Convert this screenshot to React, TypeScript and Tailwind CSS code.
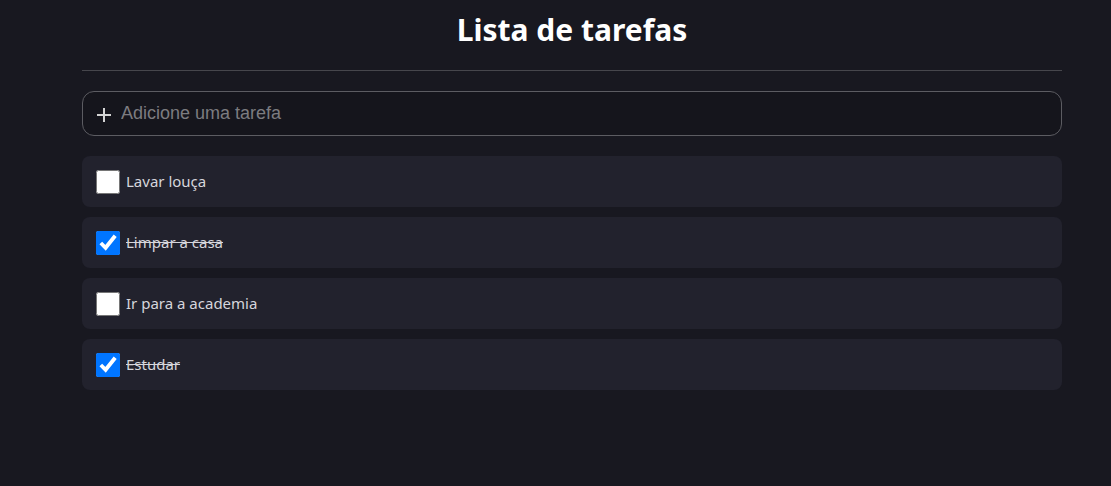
import React, { useState } from 'react';

type Task = { id: number; title: string; done: boolean };

const INITIAL: Task[] = [
  { id: 1, title: 'Lavar louça', done: false },
  { id: 2, title: 'Limpar a casa', done: true },
  { id: 3, title: 'Ir para a academia', done: false },
  { id: 4, title: 'Estudar', done: true },
];

export default function App() {
  const [tasks, setTasks] = useState<Task[]>(INITIAL);
  const [text, setText] = useState('');

  const toggle = (id: number) =>
    setTasks((t) => t.map((x) => (x.id === id ? { ...x, done: !x.done } : x)));

  const add = (e: React.FormEvent) => {
    e.preventDefault();
    if (!text.trim()) return;
    setTasks((t) => [...t, { id: Date.now(), title: text.trim(), done: false }]);
    setText('');
  };

  return (
    <div className="min-h-screen w-full bg-[#181820] pl-[82px] font-['Noto_Sans',sans-serif]">
      <div className="w-[980px] flex flex-col">
        <h1 className="pt-[10px] pb-[20px] text-center text-[30px] leading-[40px] font-bold text-white">
          Lista de tarefas
        </h1>
        <div className="h-px bg-[#46464c]" />

        <form
          onSubmit={add}
          className="mt-[20px] h-[45px] flex items-center gap-[8px] px-[12px] rounded-[12px] border border-[#5c5c62] bg-[#15151c]"
        >
          <svg width="18" height="18" viewBox="0 0 18 18" className="shrink-0 mt-[3px]">
            <path d="M9 2v14M2 9h14" stroke="#d4d4d4" strokeWidth="2" />
          </svg>
          <input
            value={text}
            onChange={(e) => setText(e.target.value)}
            placeholder="Adicione uma tarefa"
            className="flex-1 bg-transparent text-[18px] text-[#e0e0e0] placeholder:text-[#7c7c80] font-['Liberation_Sans',sans-serif] focus:outline-none"
          />
        </form>

        <ul className="mt-[20px] flex flex-col gap-[10px]">
          {tasks.map((t) => (
            <li
              key={t.id}
              className="h-[51px] flex items-center gap-[6px] px-[14px] rounded-[8px] bg-[#22222d]"
            >
              <input
                type="checkbox"
                checked={t.done}
                onChange={() => toggle(t.id)}
                className="w-[24px] h-[24px] m-0 shrink-0 accent-[#0075ff]"
              />
              <span
                className={`text-[15px] text-[#d6d6dc] ${t.done ? 'line-through' : ''}`}
              >
                {t.title}
              </span>
            </li>
          ))}
        </ul>
      </div>
    </div>
  );
}
